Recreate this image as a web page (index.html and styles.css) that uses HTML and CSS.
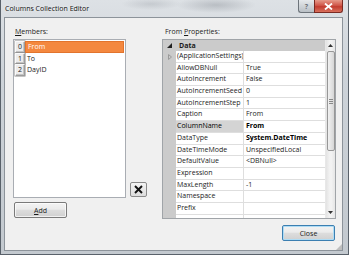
FILE: index.html
```html
<!DOCTYPE html>
<html lang="en">
<head>
    <meta charset="UTF-8">
    <title>Columns Collection Editor</title>
    <link rel="stylesheet" href="styles.css">
</head>
<body>
    <div class="window">
        <div class="titlebar">
            <span class="title">Columns Collection Editor</span>
            <div class="caption-buttons">
                <span class="cap-help">?</span>
                <span class="cap-close">
                    <svg width="9" height="7" viewBox="0 0 9 7"><path d="M1 0.5 L8 6.5 M8 0.5 L1 6.5" stroke="#fff" stroke-width="1.8"/></svg>
                </span>
            </div>
        </div>

        <div class="client">
            <div class="members">
                <div class="label"><u>M</u>embers:</div>
                <div class="members-row">
                    <ul class="listbox">
                        <li class="item selected"><span class="index">0</span><span class="item-name">From</span></li>
                        <li class="item"><span class="index">1</span><span class="item-name">To</span></li>
                        <li class="item"><span class="index">2</span><span class="item-name">DayID</span></li>
                    </ul>
                    <button class="btn-delete">
                        <svg width="9" height="9" viewBox="0 0 9 9"><path d="M1 1 L8 8 M8 1 L1 8" stroke="#111" stroke-width="1.9"/></svg>
                    </button>
                </div>
                <button class="btn btn-add"><u>A</u>dd</button>
            </div>

            <div class="properties">
                <div class="label label-props">From <u>P</u>roperties:</div>
                <div class="propgrid">
                    <div class="grid-body">
                        <div class="category">
                            <span class="margin-cell"><svg width="5" height="5" viewBox="0 0 5 5"><path d="M5 0 L5 5 L0 5 Z" fill="#222"/></svg></span>
                            <span class="category-name">Data</span>
                        </div>
                        <div class="prop">
                            <span class="margin-cell"><svg width="4" height="6" viewBox="0 0 4 6"><path d="M0.5 0.5 L3.5 3 L0.5 5.5 Z" fill="none" stroke="#9a9a9a"/></svg></span>
                            <span class="prop-name">(ApplicationSettings)</span>
                            <span class="prop-value"></span>
                        </div>
                        <div class="prop">
                            <span class="margin-cell"></span>
                            <span class="prop-name">AllowDBNull</span>
                            <span class="prop-value">True</span>
                        </div>
                        <div class="prop">
                            <span class="margin-cell"></span>
                            <span class="prop-name">AutoIncrement</span>
                            <span class="prop-value">False</span>
                        </div>
                        <div class="prop">
                            <span class="margin-cell"></span>
                            <span class="prop-name">AutoIncrementSeed</span>
                            <span class="prop-value">0</span>
                        </div>
                        <div class="prop">
                            <span class="margin-cell"></span>
                            <span class="prop-name">AutoIncrementStep</span>
                            <span class="prop-value">1</span>
                        </div>
                        <div class="prop">
                            <span class="margin-cell"></span>
                            <span class="prop-name">Caption</span>
                            <span class="prop-value">From</span>
                        </div>
                        <div class="prop prop-selected">
                            <span class="margin-cell"></span>
                            <span class="prop-name">ColumnName</span>
                            <span class="prop-value changed">From</span>
                        </div>
                        <div class="prop">
                            <span class="margin-cell"></span>
                            <span class="prop-name">DataType</span>
                            <span class="prop-value changed">System.DateTime</span>
                        </div>
                        <div class="prop">
                            <span class="margin-cell"></span>
                            <span class="prop-name">DateTimeMode</span>
                            <span class="prop-value">UnspecifiedLocal</span>
                        </div>
                        <div class="prop">
                            <span class="margin-cell"></span>
                            <span class="prop-name">DefaultValue</span>
                            <span class="prop-value">&lt;DBNull&gt;</span>
                        </div>
                        <div class="prop">
                            <span class="margin-cell"></span>
                            <span class="prop-name">Expression</span>
                            <span class="prop-value"></span>
                        </div>
                        <div class="prop">
                            <span class="margin-cell"></span>
                            <span class="prop-name">MaxLength</span>
                            <span class="prop-value">-1</span>
                        </div>
                        <div class="prop">
                            <span class="margin-cell"></span>
                            <span class="prop-name">Namespace</span>
                            <span class="prop-value"></span>
                        </div>
                        <div class="prop">
                            <span class="margin-cell"></span>
                            <span class="prop-name">Prefix</span>
                            <span class="prop-value"></span>
                        </div>
                        <div class="prop">
                            <span class="margin-cell"></span>
                            <span class="prop-name"></span>
                            <span class="prop-value"></span>
                        </div>
                    </div>
                    <div class="scrollbar">
                        <span class="scroll-arrow"><svg width="5" height="3" viewBox="0 0 5 3"><path d="M0 3 L2.5 0 L5 3 Z" fill="#333"/></svg></span>
                        <div class="scroll-track">
                            <span class="scroll-thumb"><span class="grip-lines"></span></span>
                        </div>
                        <span class="scroll-arrow"><svg width="5" height="3" viewBox="0 0 5 3"><path d="M0 0 L2.5 3 L5 0 Z" fill="#333"/></svg></span>
                    </div>
                </div>
                <div class="footer">
                    <button class="btn btn-close">Close</button>
                </div>
            </div>

            <span class="size-grip"></span>
        </div>
    </div>
</body>
</html>
```

FILE: styles.css
```css
:root {
    --text-primary: #1b1b1b;
    --client-bg: #f0f0f0;
    --frame-border: #59616a;
    --grid-line: #dedede;
    --grid-margin: #cbcbcb;
    --selected-orange: #f4883f;
}

* {
    margin: 0;
    padding: 0;
    box-sizing: border-box;
}

body {
    font-family: 'Open Sans', 'Noto Sans', sans-serif;
    font-size: 7px;
    color: var(--text-primary);
    background-color: #c9cfd5;
}

u {
    text-decoration-thickness: 1px;
    text-underline-offset: 1px;
}

.window {
    width: 349px;
    height: 255px;
    padding: 0 5px 3px 3px;
    border: 1px solid var(--frame-border);
    border-top: none;
    background:
        radial-gradient(ellipse 40px 8px at 215px 5px, rgba(120, 126, 134, 0.35), transparent),
        radial-gradient(ellipse 30px 6px at 150px 4px, rgba(130, 136, 144, 0.25), transparent),
        linear-gradient(180deg, #dde1e5 0%, #cdd3d9 30%, #c3c9cf 100%);
    display: flex;
    flex-direction: column;
}

/* title bar */
.titlebar {
    height: 17px;
    display: flex;
    align-items: flex-start;
    padding-left: 1px;
}

.title {
    flex: 1;
    line-height: 17px;
    color: #111;
    text-shadow: 0 0 3px rgba(255, 255, 255, 0.9);
}

.caption-buttons {
    display: flex;
    height: 13px;
}

.cap-help,
.cap-close {
    display: flex;
    align-items: center;
    justify-content: center;
    height: 13px;
    border: 1px solid #6d747b;
    border-top: none;
}

.cap-help {
    width: 16px;
    border-right: none;
    border-radius: 0 0 0 3px;
    background: linear-gradient(180deg, #e6e9ec, #b9bfc5);
    color: #6c7279;
    font-weight: 700;
    font-size: 7px;
}

.cap-close {
    width: 29px;
    border-color: #7a2a22;
    border-radius: 0 0 3px 0;
    background: linear-gradient(180deg, #e69a8a 0%, #d0574a 45%, #c23c30 55%, #d8705c 100%);
}

/* client area */
.client {
    position: relative;
    flex: 1;
    display: flex;
    padding: 9px 0 0 8px;
    background-color: var(--client-bg);
    border: 1px solid #8c939a;
}

.label {
    line-height: 10px;
    padding-left: 2px;
    margin-bottom: 2px;
}

.label-props {
    padding-left: 3px;
}

/* members list */
.members {
    width: 149px;
}

.members-row {
    display: flex;
    align-items: flex-end;
    gap: 4px;
}

.listbox {
    list-style: none;
    width: 113px;
    height: 159px;
    padding: 1px;
    background-color: #fff;
    border: 1px solid #a9adb3;
}

.item {
    display: flex;
    height: 11.5px;
    line-height: 11px;
}

.index {
    width: 10px;
    text-align: center;
    background-color: #ececec;
    border: 1px solid #9c9c9c;
    border-top-color: #fafafa;
    border-left-color: #fafafa;
    box-shadow: inset -1px -1px 0 #c4c4c4, 0 0 0 0.5px #8a8a8a;
    line-height: 9px;
}

.item-name {
    flex: 1;
    padding-left: 2px;
}

.item.selected .item-name {
    background-color: var(--selected-orange);
    border: 1px solid #e2742d;
    color: #fff;
    line-height: 9px;
}

.btn-delete {
    width: 17px;
    height: 15px;
    margin-bottom: 1px;
    display: flex;
    align-items: center;
    justify-content: center;
    border: 1px solid #8a8a8a;
    border-radius: 2px;
    background: linear-gradient(180deg, #f4f4f4, #dcdcdc);
}

.btn {
    font-family: inherit;
    font-size: 7px;
    color: var(--text-primary);
    width: 53px;
    height: 16px;
    border: 1px solid #7a7a7a;
    border-radius: 2px;
    background: linear-gradient(180deg, #f3f3f3 0%, #ebebeb 45%, #dddddd 50%, #d0d0d0 100%);
    box-shadow: inset 0 0 0 1px rgba(255, 255, 255, 0.7);
}

.btn-add {
    margin: 4px 0 0 1px;
}

/* property grid */
.properties {
    width: 174px;
}

.propgrid {
    display: flex;
    height: 180px;
    border: 1px solid #a0a4a8;
    background-color: #fff;
}

.grid-body {
    flex: 1;
    overflow: hidden;
    background: linear-gradient(90deg, var(--grid-margin) 13px, #fff 13px);
}

.category {
    display: flex;
    height: 11px;
    line-height: 11px;
    background-color: var(--grid-margin);
}

.category-name {
    font-weight: 700;
    padding-left: 3px;
}

.margin-cell {
    width: 13px;
    flex-shrink: 0;
    display: flex;
    align-items: center;
    justify-content: center;
}

.prop {
    display: grid;
    grid-template-columns: 13px 68px 1fr;
    height: 11.7px;
    line-height: 10.7px;
}

.prop-name,
.prop-value {
    white-space: nowrap;
    overflow: hidden;
    border-bottom: 1px solid var(--grid-line);
}

.prop-name {
    padding-left: 1px;
    border-right: 1px solid var(--grid-line);
}

.prop-value {
    padding-left: 2px;
}

.prop-selected .prop-name {
    background-color: #d4d4d4;
    color: #000;
}

.changed {
    font-weight: 700;
    color: #000;
}

.scrollbar {
    width: 10px;
    display: flex;
    flex-direction: column;
    background: linear-gradient(90deg, #e3e3e3, #f2f2f2 40%, #f2f2f2 60%, #e6e6e6);
    border-left: 1px solid #e8e8e8;
}

.scroll-arrow {
    height: 11px;
    display: flex;
    align-items: center;
    justify-content: center;
}

.scroll-track {
    flex: 1;
}

.scroll-thumb {
    display: flex;
    align-items: center;
    justify-content: center;
    height: 100px;
    margin: 0 0.5px;
    border: 1px solid #979797;
    border-radius: 2px;
    background: linear-gradient(90deg, #f1f1f1, #e4e4e4 50%, #d6d6d6);
}

.grip-lines {
    width: 4px;
    height: 5px;
    background: repeating-linear-gradient(180deg, #888 0 1px, transparent 1px 2px);
}

.footer {
    display: flex;
    justify-content: flex-end;
    margin-top: 6px;
    padding-right: 1px;
}

.btn-close {
    border-color: #3c7fb1;
    box-shadow: inset 0 0 0 1px #aedcf5;
}

.size-grip {
    position: absolute;
    right: 0;
    bottom: 0;
    width: 6px;
    height: 6px;
    background: radial-gradient(circle, #a2a2a2 0.6px, transparent 0.9px) 0 0 / 2px 2px;
    clip-path: polygon(100% 0, 100% 100%, 0 100%);
}
```
